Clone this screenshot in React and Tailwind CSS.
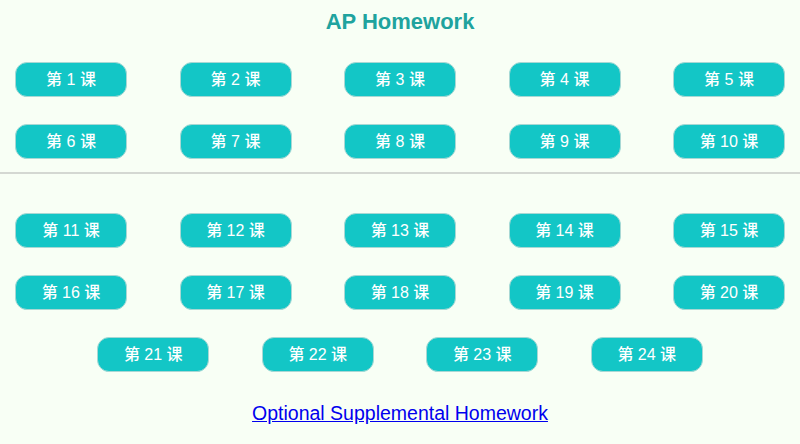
import React from 'react'

const rows = [
  [1, 2, 3, 4, 5],
  [6, 7, 8, 9, 10],
]
const rows2 = [
  [11, 12, 13, 14, 15],
  [16, 17, 18, 19, 20],
  [21, 22, 23, 24],
]

function Lesson({ n }) {
  return (
    <button className="w-[112px] h-[35px] rounded-[12px] bg-[#13c6c6] border border-[#a8d8d4] text-white text-[16px] font-medium flex items-center justify-center">
      第 {n} 课
    </button>
  )
}

function Row({ items }) {
  return (
    <div className="flex justify-center gap-[52.5px]">
      {items.map(n => <Lesson key={n} n={n} />)}
    </div>
  )
}

export default function App() {
  return (
    <div
      className="w-[800px] h-[444px] bg-[#f8fff5] overflow-hidden"
      style={{ fontFamily: '"Liberation Sans", "Noto Sans CJK SC", sans-serif' }}
    >
      <h1 className="pt-[9px] text-center text-[22px] leading-[25px] font-bold text-[#20a39e]">
        AP Homework
      </h1>
      <div className="mt-[28px] flex flex-col gap-[27px]">
        {rows.map((r, i) => <Row key={i} items={r} />)}
      </div>
      <div className="mt-[13px] h-[2px] bg-[#d4d8d2]" />
      <div className="mt-[39px] flex flex-col gap-[27px]">
        {rows2.map((r, i) => <Row key={i} items={r} />)}
      </div>
      <div className="mt-[30px] text-center text-[19.5px] leading-[22px]">
        <a href="#" className="text-[#0000ee] underline">Optional Supplemental Homework</a>
      </div>
    </div>
  )
}
